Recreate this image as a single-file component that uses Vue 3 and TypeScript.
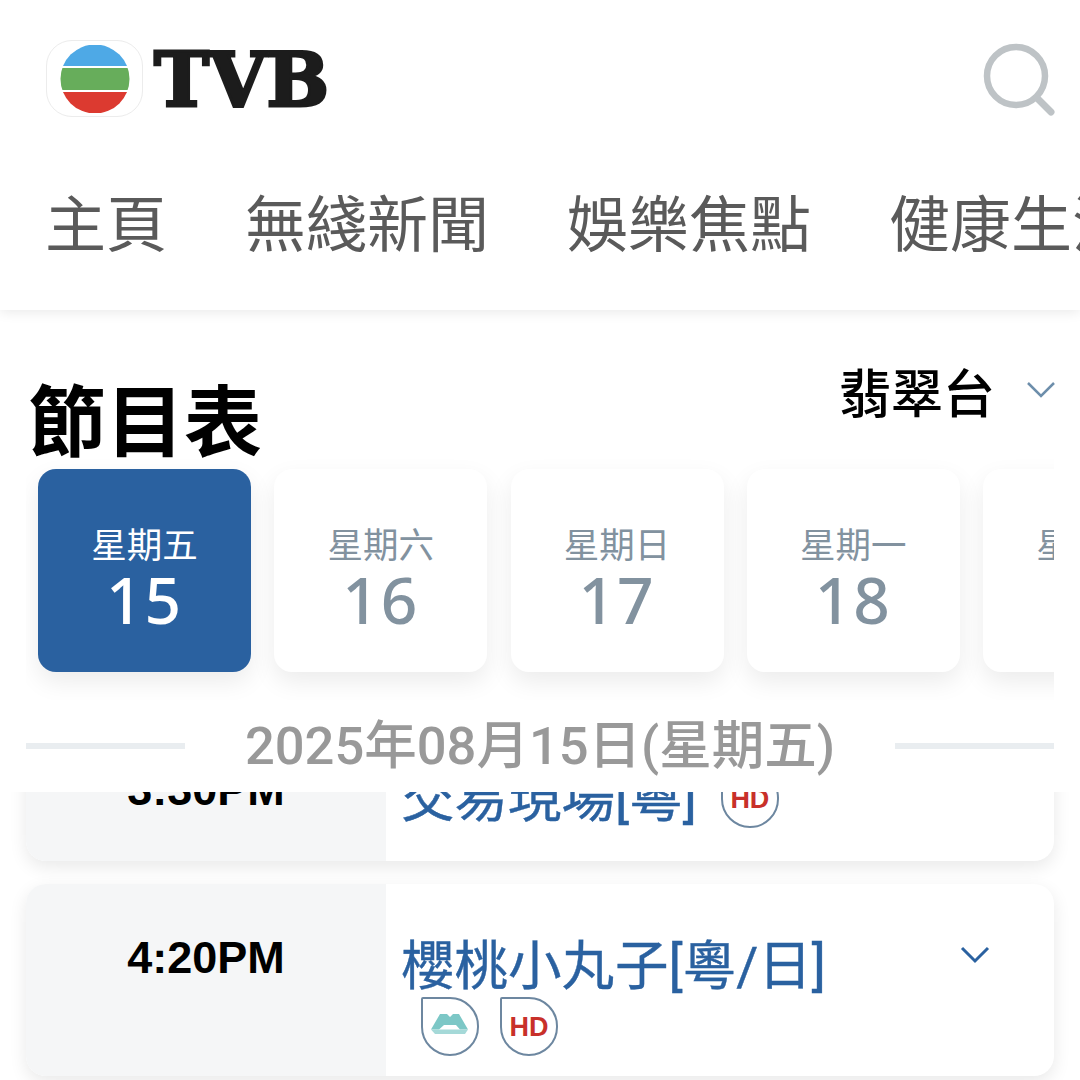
<template>
  <div class="page">
    <header class="header">
      <div class="brand-row">
        <div class="brand">
          <div class="logo-box">
            <svg width="70" height="68" viewBox="0 0 70 68">
              <defs>
                <clipPath id="ball"><circle cx="35" cy="34" r="34.5" /></clipPath>
              </defs>
              <g clip-path="url(#ball)">
                <rect x="0" y="0" width="70" height="21" fill="#4ea9e6" />
                <rect x="0" y="23" width="70" height="22" fill="#67ad5b" />
                <rect x="0" y="47" width="70" height="21" fill="#dc3a30" />
              </g>
            </svg>
          </div>
          <span class="wordmark">TVB</span>
        </div>
        <svg class="search" width="76" height="76" viewBox="0 0 76 76" fill="none" stroke="#bec3c6">
          <circle cx="33" cy="33" r="29" stroke-width="6.5" />
          <path d="M54 55 L68 69" stroke-width="7" stroke-linecap="round" />
        </svg>
      </div>
      <nav class="nav">
        <span v-for="item in navItems" :key="item" class="nav-item">{{ item }}</span>
      </nav>
    </header>

    <section class="schedule-head">
      <h1 class="title">節目表</h1>
      <div class="channel">
        <span>翡翠台</span>
        <svg width="30" height="18" viewBox="0 0 30 18" fill="none" stroke="#6d8eab" stroke-width="2.5">
          <path d="M2 2 L15 15 L28 2" />
        </svg>
      </div>
    </section>

    <div class="days">
      <div v-for="d in days" :key="d.num" class="day" :class="{ active: d.active }">
        <span class="day-name">{{ d.name }}</span>
        <span class="day-num">{{ d.num }}</span>
      </div>
    </div>

    <div class="date-strip">
      <i class="rule"></i>
      <span class="date-text">2025年08月15日(星期五)</span>
      <i class="rule"></i>
    </div>

    <div class="list">
      <div v-for="row in rows" :key="row.time" class="row" :class="{ single: !row.teal }">
        <div class="time">{{ row.time }}</div>
        <div class="info">
          <div class="name">
            <span>{{ row.name }}</span><span class="badges">
              <span v-if="row.teal" class="badge">
                <svg class="teal-icon" width="38" height="22" viewBox="0 0 38 22">
                  <path d="M0 16.5 L9 1 H16 L19 4 L22 1 H28 L37 16.5 H29 L25 12 H13 L8 16.5 Z" fill="#7cc7c6" />
                  <path d="M0 16.5 H37 L34 21 H4 Z" fill="#a5d9d8" />
                </svg>
              </span>
              <span class="badge hd">HD</span>
            </span>
          </div>
          <svg v-if="row.open" class="row-chevron" width="30" height="18" viewBox="0 0 30 18" fill="none" stroke="#2a61a0" stroke-width="3">
            <path d="M2 2 L15 15 L28 2" />
          </svg>
        </div>
      </div>
    </div>
  </div>
</template>

<script setup lang="ts">
const navItems = ['主頁', '無綫新聞', '娛樂焦點', '健康生活']

const days = [
  { name: '星期五', num: 15, active: true },
  { name: '星期六', num: 16, active: false },
  { name: '星期日', num: 17, active: false },
  { name: '星期一', num: 18, active: false },
  { name: '星期二', num: 19, active: false }
]

const rows = [
  { time: '3:30PM', name: '交易現場[粵]', teal: false, open: false },
  { time: '4:20PM', name: '櫻桃小丸子[粵/日]', teal: true, open: true }
]
</script>

<style>
html,
body {
  margin: 0;
  background: #fff;
}
</style>

<style scoped>
.page {
  width: 1080px;
  height: 1080px;
  overflow: hidden;
  display: flex;
  flex-direction: column;
  background: #fff;
  font-family: Roboto, "Noto Sans CJK TC", sans-serif;
}

.header {
  height: 310px;
  flex-shrink: 0;
  box-shadow: 0 2px 12px rgba(0, 0, 0, 0.09);
  position: relative;
  z-index: 2;
  background: #fff;
}

.brand-row {
  height: 153px;
  padding: 40px 21px 0 46px;
  box-sizing: border-box;
  display: flex;
  justify-content: space-between;
  align-items: flex-start;
}

.brand {
  display: flex;
  align-items: flex-start;
  gap: 11px;
}

.logo-box {
  width: 97px;
  height: 77px;
  box-sizing: border-box;
  border: 1px solid #ececec;
  border-radius: 26px;
  display: flex;
  align-items: center;
  justify-content: center;
}

.wordmark {
  font-family: "DejaVu Serif", serif;
  font-weight: 700;
  font-size: 74px;
  line-height: 77px;
  color: #1c1c1c;
  -webkit-text-stroke: 3px #1c1c1c;
  padding-top: 2px;
}

.search {
  margin-top: 3px;
}

.nav {
  display: flex;
  gap: 78px;
  padding-left: 45px;
  white-space: nowrap;
  overflow: hidden;
}

.nav-item {
  font-size: 61px;
  line-height: 146px;
  color: #5a5a5a;
  flex-shrink: 0;
}

.schedule-head {
  height: 143px;
  flex-shrink: 0;
  padding: 0 24px 0 28px;
  box-sizing: border-box;
  display: flex;
  justify-content: space-between;
}

.title {
  margin: 0;
  padding-top: 72px;
  font-size: 78px;
  line-height: 86px;
  font-weight: 700;
  color: #000;
}

.channel {
  display: flex;
  align-items: center;
  gap: 31px;
  height: 50px;
  margin-top: 55px;
  font-size: 52px;
  font-weight: 500;
  color: #000;
}

.days {
  flex-shrink: 0;
  height: 247px;
  margin: 0 26px;
  padding: 16px 0 0 12px;
  box-sizing: border-box;
  display: flex;
  gap: 23.25px;
  overflow: hidden;
}

.day {
  width: 213px;
  height: 203px;
  flex-shrink: 0;
  border-radius: 18px;
  background: #fff;
  box-shadow: 0 10px 24px rgba(0, 0, 0, 0.08);
  display: flex;
  flex-direction: column;
  align-items: center;
  padding-top: 54px;
  box-sizing: border-box;
  color: #82929f;
}

.day.active {
  background: #2a61a0;
  color: #fff;
}

.day-name {
  font-size: 35.5px;
  line-height: 46px;
}

.day-num {
  font-family: "Noto Sans", sans-serif;
  font-weight: 500;
  font-size: 64px;
  line-height: 68px;
  letter-spacing: 2px;
  margin-top: -3px;
}

.date-strip {
  flex-shrink: 0;
  height: 92px;
  margin: 0 26px;
  display: flex;
  align-items: center;
  justify-content: space-between;
  background: #fff;
}

.rule {
  width: 159px;
  height: 6px;
  background: #e9edf0;
}

.date-text {
  font-size: 52.5px;
  font-weight: 500;
  color: #999;
  white-space: nowrap;
  margin-bottom: 10px;
}

.list {
  flex: 1;
  min-height: 0;
  padding: 0 26px 4px;
  overflow: hidden;
  display: flex;
  flex-direction: column;
  justify-content: flex-end;
  gap: 23px;
}

.row {
  flex-shrink: 0;
  display: flex;
  border-radius: 20px;
  overflow: hidden;
  background: #fff;
  box-shadow: 0 6px 18px rgba(0, 0, 0, 0.09);
}

.time {
  width: 360px;
  flex-shrink: 0;
  padding-top: 51px;
  box-sizing: border-box;
  text-align: center;
  background: #f5f6f7;
  font-family: "Liberation Sans", sans-serif;
  font-size: 45px;
  line-height: 46px;
  font-weight: 700;
  color: #000;
}

.info {
  flex: 1;
  display: flex;
  justify-content: space-between;
  padding: 53px 64px 19px 15px;
}

.single .info {
  padding-bottom: 32px;
}

.name {
  width: 540px;
  font-size: 53.5px;
  line-height: 60px;
  color: #2a61a0;
  -webkit-text-stroke: 0.4px #2a61a0;
}

.badges {
  display: inline-flex;
  gap: 21px;
  margin-left: 20px;
  vertical-align: top;
}

.single .badges {
  margin-left: 24px;
}

.badge {
  width: 58px;
  height: 59px;
  box-sizing: border-box;
  border: 2px solid #6d87a0;
  border-radius: 2px 29px 29px 29px;
  display: flex;
  align-items: center;
  justify-content: center;
  background: #fff;
  -webkit-text-stroke: 0;
}

.teal-icon {
  flex-shrink: 0;
  margin-bottom: 5px;
}

.hd {
  font-family: "Liberation Sans", sans-serif;
  font-size: 27px;
  font-weight: 700;
  color: #c8302a;
}

.row-chevron {
  margin-top: 9px;
}
</style>
